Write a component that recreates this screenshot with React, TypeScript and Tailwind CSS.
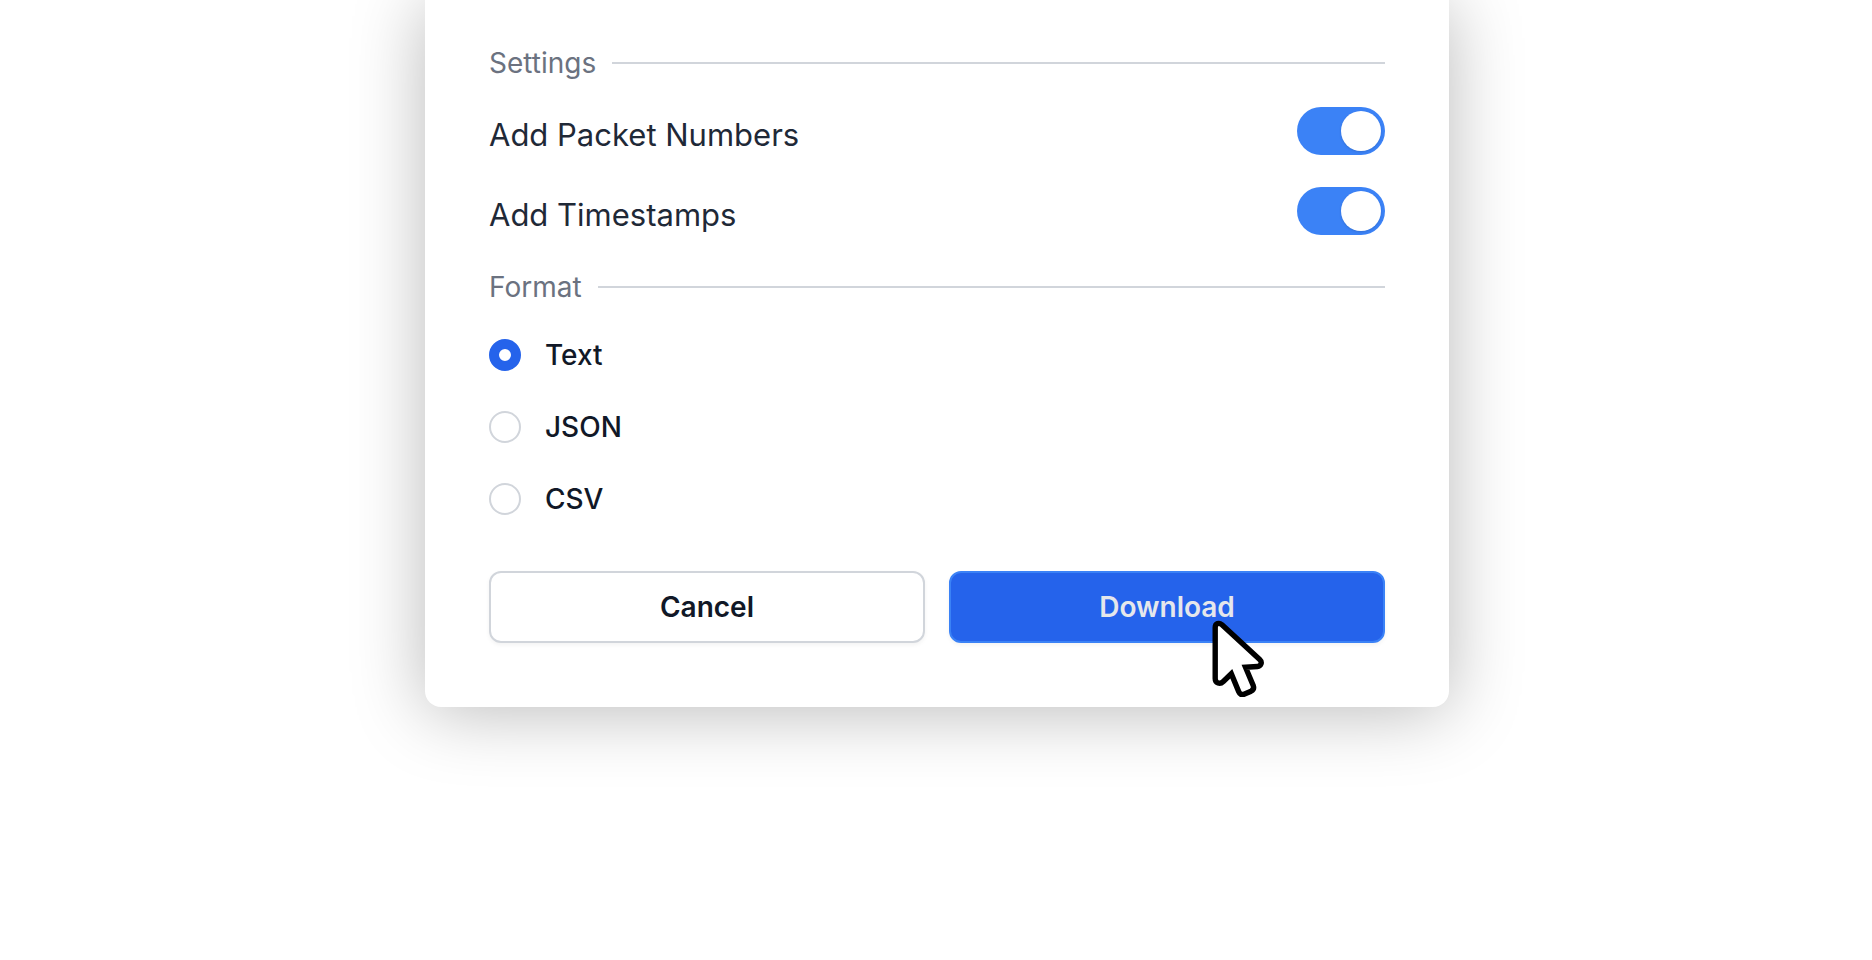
import { useState } from "react";

function SectionHeading({ title }: { title: string }) {
  return (
    <div className="flex items-center gap-4">
      <h2 className="text-[28px] leading-10 text-[#6b7280]">{title}</h2>
      <div className="h-0.5 flex-1 bg-[#d1d5db]" />
    </div>
  );
}

function ToggleRow({ label }: { label: string }) {
  const [on, setOn] = useState(true);
  return (
    <label className="flex items-start justify-between">
      <span className="pt-1 text-[31px] leading-12 text-[#1f2937]">{label}</span>
      <span className="relative flex">
        <input
          type="checkbox"
          role="switch"
          checked={on}
          onChange={(e) => setOn(e.target.checked)}
          className="peer sr-only"
        />
        <span className="flex h-12 w-22 items-center rounded-full bg-gray-200 p-1 peer-checked:justify-end peer-checked:bg-[#3b82f6]">
          <span className="size-10 rounded-full bg-white shadow" />
        </span>
      </span>
    </label>
  );
}

const formats = ["Text", "JSON", "CSV"];

function FormatOptions() {
  const [format, setFormat] = useState("Text");
  return (
    <div className="flex flex-col gap-8">
      {formats.map((name) => (
        <label key={name} className="flex items-center gap-6">
          <input
            type="radio"
            name="format"
            value={name}
            checked={format === name}
            onChange={() => setFormat(name)}
            className="size-8 appearance-none rounded-full border-2 border-[#d1d5db] bg-white checked:border-10 checked:border-[#2563eb]"
          />
          <span className="text-[28px] leading-10 font-medium text-[#111827]">{name}</span>
        </label>
      ))}
    </div>
  );
}

function Pointer() {
  return (
    <svg
      aria-hidden="true"
      viewBox="0 0 54 78"
      className="pointer-events-none absolute top-12 left-1/2 ml-11 h-[78px] w-[54px]"
      fill="white"
      stroke="black"
      strokeWidth="5.4"
      strokeLinejoin="miter"
    >
      <path d="M4.200 8.500 C4.200 4.300 8 3.200 11 5.800 L48.700 40.500 C51.600 43.200 50 47.200 46.500 47.500 L34.500 48.300 L42.200 66.500 C43.200 69.200 42.300 71 40 72.200 L33 75.200 C30.500 76.200 28.700 75 27.700 72.700 L20.300 54.800 L12.300 62.500 C9 65.700 4.200 64.300 4.200 59.500 Z" />
    </svg>
  );
}

export default function App() {
  return (
    <main className="flex min-h-screen items-start justify-center overflow-hidden bg-white pl-0.5 font-[Inter,sans-serif]">
      <section className="w-full max-w-5xl rounded-b-2xl bg-white px-16 pt-[43px] pb-16 shadow-[0_4px_72px_rgba(0,0,0,0.28)]">
        <SectionHeading title="Settings" />
        <div className="flex flex-col gap-7 pt-6 pb-7">
          <ToggleRow label="Add Packet Numbers" />
          <ToggleRow label="Add Timestamps" />
        </div>
        <SectionHeading title="Format" />
        <div className="pt-7 pb-13">
          <FormatOptions />
        </div>
        <div className="grid grid-cols-2 gap-6">
          <button
            type="button"
            className="rounded-xl border-2 border-[#d1d5db] bg-white py-3.5 text-[28px] leading-10 font-semibold text-[#111827] shadow-[0_2px_4px_rgba(0,0,0,0.05)]"
          >
            Cancel
          </button>
          <div className="relative">
            <button
              type="button"
              className="w-full rounded-xl border-2 border-[#3b82f6] bg-[#2563eb] py-3.5 text-[28px] leading-10 font-semibold text-[#e5e7eb] shadow-[0_2px_4px_rgba(0,0,0,0.05)]"
            >
              Download
            </button>
            <Pointer />
          </div>
        </div>
      </section>
    </main>
  );
}
